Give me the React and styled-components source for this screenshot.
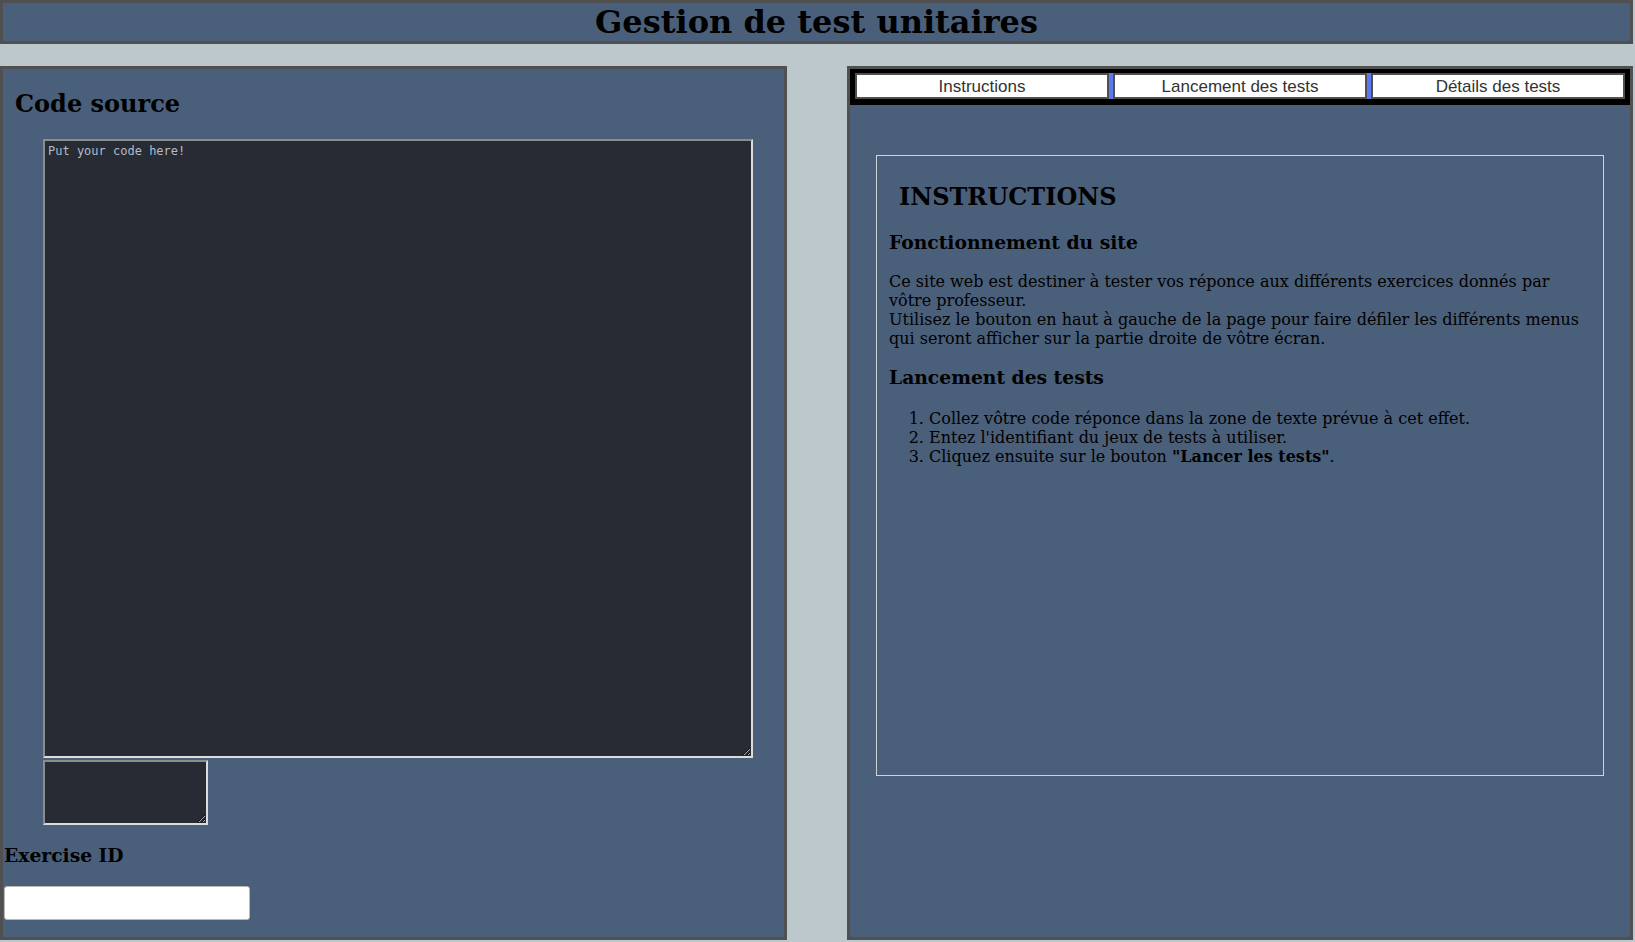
import React from "react";
import styled, { createGlobalStyle } from "styled-components";

const GlobalStyle = createGlobalStyle`
  html, body {
    margin: 0;
    padding: 0;
    background: #bdc8cd;
    font-family: "DejaVu Serif", serif;
    color: #000;
  }
`;

const tabs = ["Instructions", "Lancement des tests", "Détails des tests"];

function App() {
  return (
    <>
      <GlobalStyle />
      <Page>
        <Header>
          <Title>Gestion de test unitaires</Title>
        </Header>
        <Columns>
          <Panel>
            <PanelTitle>Code source</PanelTitle>
            <CodeArea placeholder="Put your code here!" />
            <OutputArea />
            <Label>Exercise ID</Label>
            <IdInput type="text" />
          </Panel>
          <Panel>
            <TabBar>
              {tabs.map((tab, i) => (
                <React.Fragment key={tab}>
                  {i > 0 && <TabSeparator />}
                  <Tab>{tab}</Tab>
                </React.Fragment>
              ))}
            </TabBar>
            <InstructionBox>
              <BoxTitle>INSTRUCTIONS</BoxTitle>
              <SubTitle>Fonctionnement du site</SubTitle>
              <Text>
                Ce site web est destiner à tester vos réponce aux différents
                exercices donnés par vôtre professeur.
                <br />
                Utilisez le bouton en haut à gauche de la page pour faire
                défiler les différents menus qui seront afficher sur la partie
                droite de vôtre écran.
              </Text>
              <SubTitle>Lancement des tests</SubTitle>
              <Steps>
                <li>Collez vôtre code réponce dans la zone de texte prévue à cet effet.</li>
                <li>Entez l'identifiant du jeux de tests à utiliser.</li>
                <li>
                  Cliquez ensuite sur le bouton <b>"Lancer les tests"</b>.
                </li>
              </Steps>
            </InstructionBox>
          </Panel>
        </Columns>
      </Page>
    </>
  );
}

export default App;

const Page = styled.div`
  width: 1633px;
  display: flex;
  flex-direction: column;
  gap: 22px;
`;

const Header = styled.header`
  height: 38px;
  background: #4a5f7a;
  border: 3px solid #505050;
  display: flex;
  align-items: center;
  justify-content: center;
`;

const Title = styled.h1`
  margin: 0;
  font-size: 32px;
  font-weight: bold;
  line-height: 1;
`;

const Columns = styled.div`
  display: grid;
  grid-template-columns: 787px 1fr;
  column-gap: 60px;
  height: 874px;
`;

const Panel = styled.section`
  background: #4a5f7a;
  border: 3px solid #505050;
  display: flex;
  flex-direction: column;
  align-items: flex-start;
`;

const PanelTitle = styled.h2`
  font-size: 24px;
  margin: 20px 0 21px 12px;
`;

const CodeArea = styled.textarea`
  box-sizing: border-box;
  width: 710px;
  height: 619px;
  margin-left: 40px;
  padding: 3px;
  background: #272b34;
  color: #d0d6de;
  border: 2px solid;
  border-color: #8c8c8c #dcdcdc #dcdcdc #8c8c8c;
  font-family: "DejaVu Sans Mono", monospace;
  font-size: 12px;
  outline: none;

  &::placeholder {
    color: #b3bcc8;
  }
`;

const OutputArea = styled(CodeArea)`
  width: 165px;
  height: 65px;
  margin-top: 2px;
`;

const Label = styled.h3`
  font-size: 18.72px;
  margin: 19px 0 20px 1px;
`;

const IdInput = styled.input`
  box-sizing: border-box;
  width: 246px;
  height: 34px;
  margin-left: 1px;
  background: #fff;
  border: 1px solid #b8b8b8;
  border-radius: 3px;
  outline: none;
`;

const TabBar = styled.nav`
  align-self: stretch;
  display: flex;
  background: #000;
  padding: 4px 5px 6px;
`;

const Tab = styled.button`
  flex: 1;
  height: 26px;
  padding: 2px 0 0;
  background: #fff;
  border: 2px solid #505050;
  font-family: "Liberation Sans", Arial, sans-serif;
  font-size: 17px;
  color: #333;
  cursor: pointer;
`;

const TabSeparator = styled.span`
  width: 4px;
  background: #5a78f0;
`;

const InstructionBox = styled.article`
  align-self: stretch;
  box-sizing: border-box;
  height: 621px;
  margin: 50px 26px 0;
  padding: 6px 12px;
  border: 1px solid #d0d4d8;
  font-size: 16px;
`;

const BoxTitle = styled.h2`
  font-size: 24px;
  margin: 20px 0 20px 10px;
`;

const SubTitle = styled.h3`
  font-size: 18.72px;
  margin: 18.72px 0;
`;

const Text = styled.p`
  margin: 16px 0;
`;

const Steps = styled.ol`
  margin: 21px 0 16px;
  padding-left: 40px;
`;
